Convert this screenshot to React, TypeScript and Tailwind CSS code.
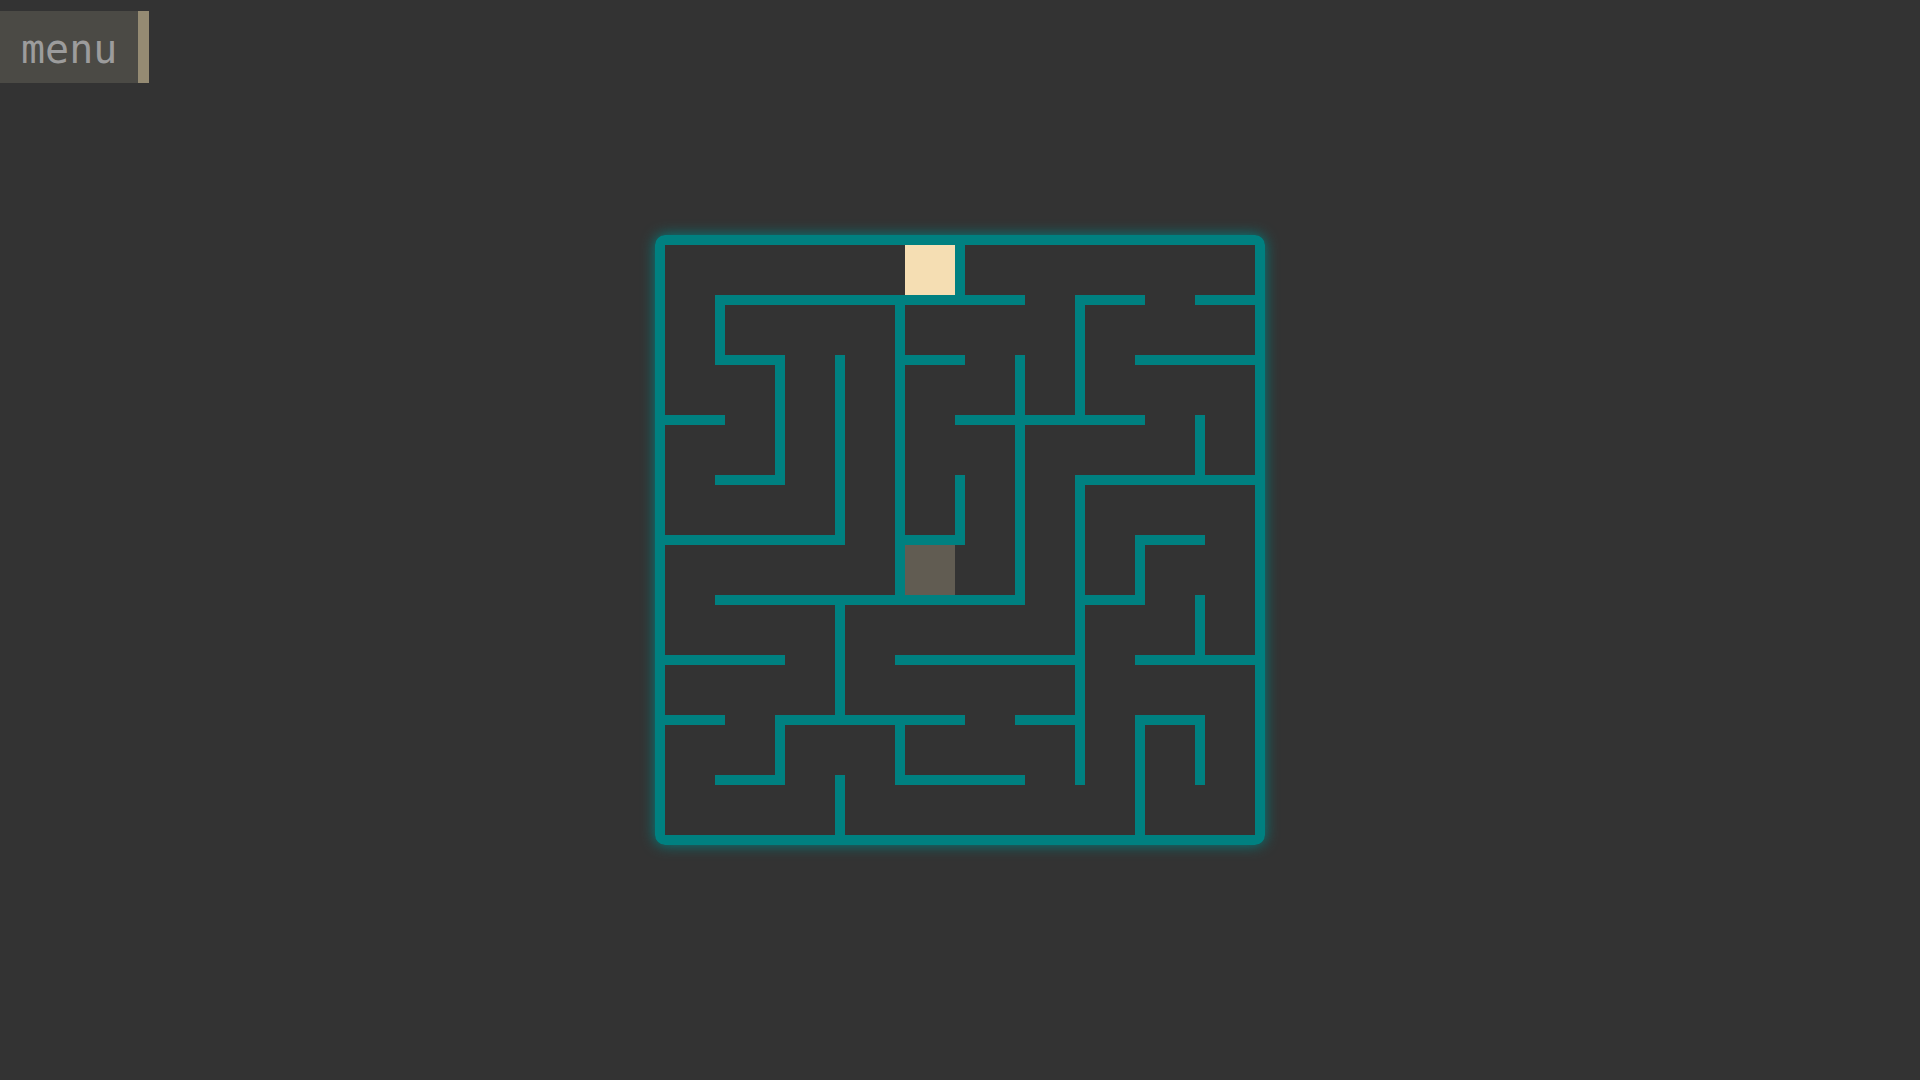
const CELL = 60;
const WALL = 10;

// [index, from, to] in grid units; horizontal walls sit on row lines, vertical on column lines
const hWalls: [number, number, number][] = [
  [1, 1, 6], [1, 7, 8], [1, 9, 10],
  [2, 1, 2], [2, 4, 5], [2, 8, 10],
  [3, 0, 1], [3, 5, 8],
  [4, 1, 2], [4, 7, 10],
  [5, 0, 3], [5, 4, 5], [5, 8, 9],
  [6, 1, 6], [6, 7, 8],
  [7, 0, 2], [7, 4, 7], [7, 8, 10],
  [8, 0, 1], [8, 2, 5], [8, 6, 7], [8, 8, 9],
  [9, 1, 2], [9, 4, 6],
];

const vWalls: [number, number, number][] = [
  [1, 1, 2],
  [2, 2, 4], [2, 8, 9],
  [3, 2, 5], [3, 6, 8], [3, 9, 10],
  [4, 1, 6], [4, 8, 9],
  [5, 0, 1], [5, 4, 5],
  [6, 2, 6],
  [7, 1, 3], [7, 4, 9],
  [8, 5, 6], [8, 8, 10],
  [9, 3, 4], [9, 6, 7], [9, 8, 9],
];

function Cell({ col, row, fill }: { col: number; row: number; fill: string }) {
  return (
    <rect x={col * CELL + WALL} y={row * CELL + WALL} width={CELL - WALL} height={CELL - WALL} fill={fill} />
  );
}

function Maze() {
  return (
    <div className="w-[610px] h-[610px] border-[10px] border-[#008080] rounded-[10px] shadow-[0_0_14px_#008080]">
      <svg width="590" height="590" viewBox="10 10 590 590" className="block">
        <Cell col={4} row={0} fill="#f5deb3" />
        <Cell col={4} row={5} fill="#615c52" />
        {hWalls.map(([y, a, b], i) => (
          <rect key={`h-${i}`} x={a * CELL} y={y * CELL} width={(b - a) * CELL + WALL} height={WALL} fill="#008080" />
        ))}
        {vWalls.map(([x, a, b], i) => (
          <rect key={`v-${i}`} x={x * CELL} y={a * CELL} width={WALL} height={(b - a) * CELL + WALL} fill="#008080" />
        ))}
      </svg>
    </div>
  );
}

export default function App() {
  return (
    <div className="relative w-full h-screen bg-[#333333] flex items-center justify-center">
      <button className="absolute left-0 top-[11px] h-[72px] w-[149px] pl-[21px] pt-[4px] text-left bg-[#4b4a45] border-r-[11px] border-[#958b73] text-[#9c9c9c] text-[40px] leading-none font-['DejaVu_Sans_Mono',monospace]">
        menu
      </button>
      <Maze />
    </div>
  );
}
